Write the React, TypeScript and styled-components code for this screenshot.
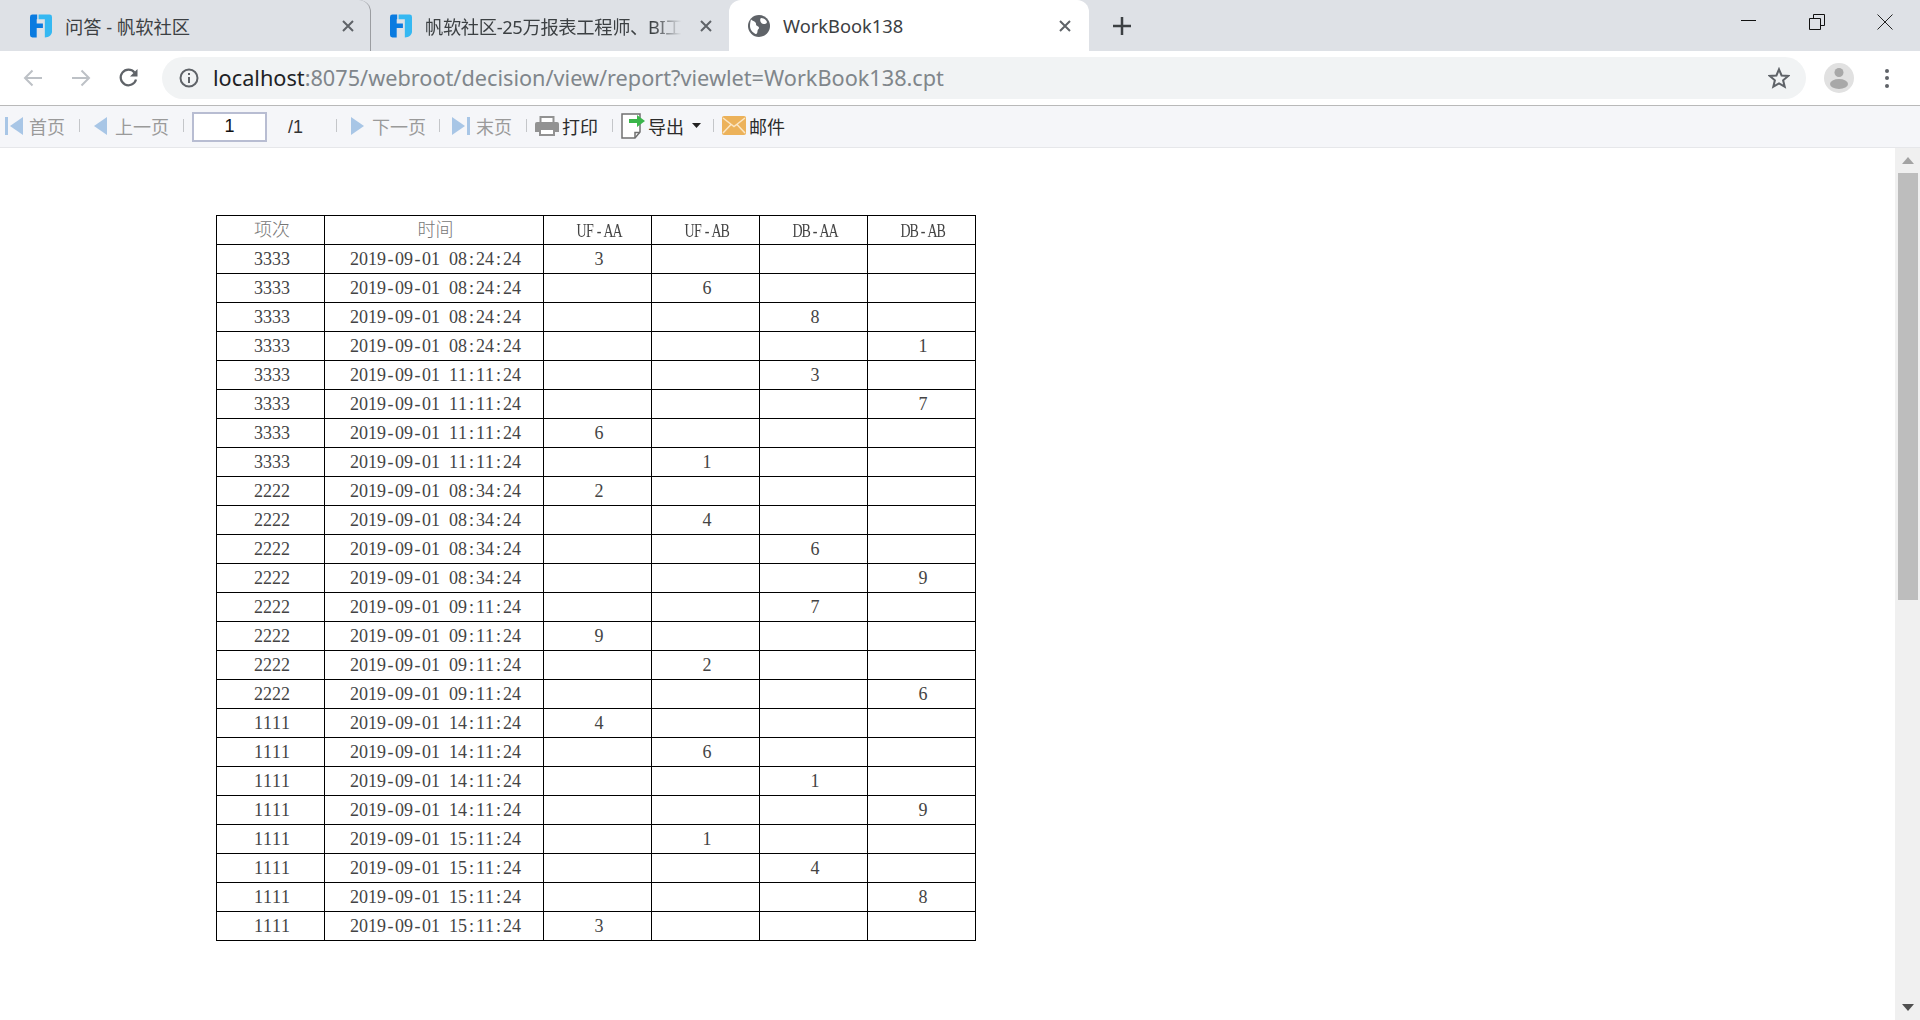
import React from "react";
import styled, { createGlobalStyle } from "styled-components";

const GlobalStyle = createGlobalStyle`
  html, body {
    margin: 0;
    height: 100%;
    overflow: hidden;
    background: #fff;
  }
  * { box-sizing: border-box; }
`;

const Window = styled.div`
  width: 1920px;
  height: 1020px;
  display: flex;
  flex-direction: column;
  font-family: "Noto Sans", "Noto Sans CJK SC", sans-serif;
`;

const TitleBar = styled.div`
  height: 51px;
  flex: none;
  display: flex;
  background: #dee1e6;
  padding-left: 11px;
`;

const Tab = styled.div<{ $width: number; $inset: number; $active?: boolean; $divider?: boolean }>`
  width: ${(p) => p.$width}px;
  display: flex;
  align-items: center;
  gap: 13px;
  padding: 0 ${(p) => p.$inset}px 0 19px;
  border-radius: 12px 12px 0 0;
  background: ${(p) => (p.$active ? "#fff" : "transparent")};
  border-right: ${(p) => (p.$divider ? "1px solid #9b9da1" : "none")};
`;

const TabTitle = styled.span<{ $fade?: boolean }>`
  flex: 1;
  min-width: 0;
  white-space: nowrap;
  font-size: 18.3px;
  color: #3c4043;
  ${(p) =>
    p.$fade &&
    `letter-spacing: -0.35px;
     mask-image: linear-gradient(to right, #000 88%, transparent 99%);`}
`;

const TabClose = styled.span`
  flex: none;
  width: 18px;
  height: 18px;
  display: flex;
  align-items: center;
  justify-content: center;
`;

const NewTab = styled.div`
  width: 66px;
  display: flex;
  align-items: center;
  justify-content: center;
`;

const WindowControls = styled.div`
  margin-left: auto;
  padding-right: 1px;
  display: flex;
  align-items: flex-start;
`;

const WindowButton = styled.div`
  width: 68px;
  height: 44px;
  display: flex;
  align-items: center;
  justify-content: center;
`;

const AddressRow = styled.div`
  height: 55px;
  flex: none;
  display: flex;
  align-items: center;
  background: #fff;
  border-bottom: 1px solid #b9b9b9;
`;

const NavGroup = styled.div`
  flex: none;
  width: 162px;
  padding-left: 9px;
  display: flex;
`;

const NavButton = styled.div`
  width: 48px;
  height: 42px;
  flex: none;
  display: flex;
  align-items: center;
  justify-content: center;
`;

const Omnibox = styled.div`
  width: 1644px;
  height: 42px;
  flex: none;
  display: flex;
  align-items: center;
  padding: 0 16px 0 17px;
  border-radius: 21px;
  background: #f1f3f4;
`;

const UrlText = styled.div`
  margin-left: 14px;
  padding-bottom: 2px;
  flex: 1;
  font-size: 21.7px;
  color: #80868b;
  white-space: nowrap;
  span {
    color: #202124;
  }
`;

const Profile = styled.div`
  margin-left: 18px;
  width: 30px;
  height: 30px;
  flex: none;
`;

const Menu = styled.div`
  margin-left: 25px;
  width: 16px;
  display: flex;
  flex-direction: column;
  align-items: center;
  gap: 3.5px;
  i {
    width: 4px;
    height: 4px;
    border-radius: 50%;
    background: #5f6368;
  }
`;

const ReportToolbar = styled.div`
  height: 42px;
  flex: none;
  display: flex;
  align-items: center;
  padding: 0 0 2px 5px;
  background: #f5f6f9;
  border-bottom: 1px solid #e6e7ea;
  font-size: 18px;
`;

const ToolButton = styled.div<{ $disabled?: boolean; $gap: number }>`
  display: flex;
  align-items: center;
  gap: ${(p) => p.$gap}px;
  color: ${(p) => (p.$disabled ? "#9a9a9a" : "#2b2b2b")};
  white-space: nowrap;
`;

const ToolSep = styled.div<{ $left: number; $right: number }>`
  width: 1px;
  height: 13px;
  flex: none;
  background: #c4c6c9;
  margin: 0 ${(p) => p.$right}px 0 ${(p) => p.$left}px;
`;

const PageInput = styled.div`
  width: 75px;
  height: 30px;
  margin-top: 2px;
  flex: none;
  display: flex;
  align-items: center;
  justify-content: center;
  background: #fff;
  border: 2px solid #b8bdd2;
  font-family: "Liberation Sans", sans-serif;
  font-size: 18px;
  color: #111;
`;

const PageTotal = styled.div`
  margin: 3px 0 0 21px;
  width: 48px;
  font-family: "Liberation Sans", sans-serif;
  font-size: 18px;
  color: #333;
`;

const Caret = styled.svg`
  margin-left: 5px;
`;

const Body = styled.div`
  flex: 1;
  min-height: 0;
  display: flex;
`;

const ReportArea = styled.div`
  flex: 1;
  padding: 67px 0 0 216px;
  background: #fff;
`;

const ReportTable = styled.table`
  width: 759px;
  border-collapse: collapse;
  table-layout: fixed;
  font-family: "Liberation Serif", "Noto Sans CJK SC", serif;
  font-size: 18px;
  color: #444;
`;

const Cell = styled.td`
  height: 29px;
  padding: 0 0 1px 3px;
  border: 1px solid #000;
  text-align: center;
  line-height: 1;
  white-space: pre;
`;

const HeadCell = styled(Cell).attrs({ as: "th" })`
  font-weight: 400;
`;

const CjkLabel = styled.span`
  display: block;
  margin-bottom: 3px;
  font-family: "Noto Sans CJK SC", sans-serif;
  font-weight: 300;
  color: #777;
`;

// SimSun style text: every character takes the same 9px cell
const FixedRun = styled.span<{ $caps?: boolean }>`
  display: inline-block;
  ${(p) => p.$caps && "font-size: 14px; transform: scaleY(1.3);"}
`;

const FixedChar = styled.span`
  display: inline-block;
  width: 9px;
  text-align: center;
`;

const Scrollbar = styled.div`
  width: 25px;
  flex: none;
  display: flex;
  flex-direction: column;
  align-items: center;
  background: #f0f0f0;
`;

const ScrollArrow = styled.div`
  height: 25px;
  flex: none;
  display: flex;
  align-items: center;
  justify-content: center;
`;

const ScrollThumb = styled.div`
  width: 20px;
  height: 427px;
  flex: none;
  background: #bdbdbd;
`;

const ScrollTrack = styled.div`
  flex: 1;
`;

function Fixed({ text, caps }: { text: string; caps?: boolean }) {
  return (
    <FixedRun $caps={caps}>
      {text.split("").map((ch, i) => (
        <FixedChar key={i}>{ch}</FixedChar>
      ))}
    </FixedRun>
  );
}

function FanruanLogo() {
  return (
    <svg width="22" height="24" viewBox="0 0 23 24" style={{ flex: "none" }}>
      <path d="M7.500 0H2.500A2.500 2.500 0 0 0 0 2.500V21.500A2.500 2.500 0 0 0 2.500 24H7V14H13.500V9.500H7V5H7.500Z" fill="#0a7be0" />
      <path d="M9 0H20.500A2.500 2.500 0 0 1 23 2.500V18C23 21 20 24 15.500 24V5H9Z" fill="#35b8f2" />
    </svg>
  );
}

function GlobeIcon() {
  return (
    <svg width="22" height="22" viewBox="0 0 22 22" style={{ flex: "none" }}>
      <circle cx="11" cy="11" r="11" fill="#5f6368" />
      <path d="M3 4.500C5 6 6 6 7.500 7.500C8.500 8.500 7.500 9.500 8.500 10.500C9.500 11.500 11 11.500 11 13C11 14 9.500 14.500 9.500 16C9.500 17.500 9 19.500 7.500 19C4.500 17.500 2 14.500 2 11C2 8.500 2.500 6 3 4.500Z" fill="#fff" />
      <path d="M13 3C15 3 18 4.500 19 7C18.500 9 17 9 15.500 9C14 9 13 8 12.500 6.500C12 5 12 3.500 13 3Z" fill="#fff" />
    </svg>
  );
}

function CloseGlyph() {
  return (
    <svg width="14" height="14" viewBox="0 0 14 14">
      <path d="M2 2L12 12M12 2L2 12" stroke="#5f6368" strokeWidth="2" fill="none" />
    </svg>
  );
}

function PagerIcon({ dir, bar }: { dir: "left" | "right"; bar?: boolean }) {
  const left = dir === "left";
  const width = bar ? 18 : 13;
  const shape = left
    ? `M${width} 0V18L${width - 13} 9Z`
    : "M0 0V18L13 9Z";
  return (
    <svg width={width} height="18" viewBox={`0 0 ${width} 18`} style={{ flex: "none" }}>
      {bar && <rect x={left ? 0 : 15} y="0" width="3" height="18" fill="#a8c6e6" />}
      <path d={shape} fill="#a8c6e6" />
    </svg>
  );
}

function PrinterIcon() {
  return (
    <svg width="24" height="20" viewBox="0 0 24 20" style={{ flex: "none" }}>
      <path d="M5.500 1H18.500V7H5.500Z" fill="#fff" stroke="#929292" strokeWidth="2" />
      <path d="M2 6H22A2 2 0 0 1 24 8V16H0V8A2 2 0 0 1 2 6Z" fill="#929292" />
      <path d="M5 13H19V19H5Z" fill="#fff" stroke="#929292" strokeWidth="2" />
    </svg>
  );
}

function ExportIcon() {
  return (
    <svg width="24" height="26" viewBox="0 0 24 26" style={{ flex: "none" }}>
      <path d="M1 1H19V19L14 25H1Z" fill="#fff" stroke="#707070" strokeWidth="1.500" />
      <path d="M14 25V19.500H19" fill="none" stroke="#707070" strokeWidth="1.500" />
      <path d="M8 6H16V2L24 8L16 14V10H8Z" fill="#3ab54a" />
    </svg>
  );
}

function MailIcon() {
  return (
    <svg width="24" height="19" viewBox="0 0 24 19" style={{ flex: "none" }}>
      <rect width="24" height="19" rx="2" fill="#ecb25a" />
      <path d="M1 2L12 10.500L23 2M1 17L9 8.500M23 17L15 8.500" fill="none" stroke="#fbe6c4" strokeWidth="1.500" />
    </svg>
  );
}

const rows: [string, string, number, string][] = [
  ["3333", "08:24:24", 0, "3"],
  ["3333", "08:24:24", 1, "6"],
  ["3333", "08:24:24", 2, "8"],
  ["3333", "08:24:24", 3, "1"],
  ["3333", "11:11:24", 2, "3"],
  ["3333", "11:11:24", 3, "7"],
  ["3333", "11:11:24", 0, "6"],
  ["3333", "11:11:24", 1, "1"],
  ["2222", "08:34:24", 0, "2"],
  ["2222", "08:34:24", 1, "4"],
  ["2222", "08:34:24", 2, "6"],
  ["2222", "08:34:24", 3, "9"],
  ["2222", "09:11:24", 2, "7"],
  ["2222", "09:11:24", 0, "9"],
  ["2222", "09:11:24", 1, "2"],
  ["2222", "09:11:24", 3, "6"],
  ["1111", "14:11:24", 0, "4"],
  ["1111", "14:11:24", 1, "6"],
  ["1111", "14:11:24", 2, "1"],
  ["1111", "14:11:24", 3, "9"],
  ["1111", "15:11:24", 1, "1"],
  ["1111", "15:11:24", 2, "4"],
  ["1111", "15:11:24", 3, "8"],
  ["1111", "15:11:24", 0, "3"],
];

const colWidths = [108, 219, 108, 108, 108, 108];

export default function App() {
  return (
    <Window>
      <GlobalStyle />
      <TitleBar>
        <Tab $width={360} $inset={13} $divider>
          <FanruanLogo />
          <TabTitle>问答 - 帆软社区</TabTitle>
          <TabClose><CloseGlyph /></TabClose>
        </Tab>
        <Tab $width={358} $inset={14}>
          <FanruanLogo />
          <TabTitle $fade>帆软社区-25万报表工程师、BI工</TabTitle>
          <TabClose><CloseGlyph /></TabClose>
        </Tab>
        <Tab $width={360} $inset={15} $active>
          <GlobeIcon />
          <TabTitle>WorkBook138</TabTitle>
          <TabClose><CloseGlyph /></TabClose>
        </Tab>
        <NewTab>
          <svg width="18" height="18" viewBox="0 0 18 18">
            <path d="M9 0V18M0 9H18" stroke="#3c4043" strokeWidth="2.500" fill="none" />
          </svg>
        </NewTab>
        <WindowControls>
          <WindowButton>
            <svg width="16" height="16" viewBox="0 0 16 16">
              <path d="M0 6.500H15" stroke="#111" fill="none" />
            </svg>
          </WindowButton>
          <WindowButton>
            <svg width="16" height="16" viewBox="0 0 16 16">
              <path d="M.5 4.500H11.500V15.500H.5ZM4.500 4.500V.5H15.500V11.500H11.500" stroke="#111" fill="none" />
            </svg>
          </WindowButton>
          <WindowButton>
            <svg width="16" height="16" viewBox="0 0 16 16">
              <path d="M.5 .5L15.500 15.500M15.500 .5L.5 15.500" stroke="#222" fill="none" />
            </svg>
          </WindowButton>
        </WindowControls>
      </TitleBar>

      <AddressRow>
        <NavGroup>
          <NavButton>
            <svg width="22" height="22" viewBox="0 0 22 22">
              <path d="M20 11H3M10.500 3.500L3 11L10.500 18.500" stroke="#bdc1c6" strokeWidth="2" fill="none" />
            </svg>
          </NavButton>
          <NavButton>
            <svg width="22" height="22" viewBox="0 0 22 22">
              <path d="M2 11H19M11.500 3.500L19 11L11.500 18.500" stroke="#bdc1c6" strokeWidth="2" fill="none" />
            </svg>
          </NavButton>
          <NavButton>
            <svg width="22" height="22" viewBox="0 0 22 22">
              <path d="M18 12.500A7.800 7.800 0 1 1 16.500 5.500" stroke="#5f6368" strokeWidth="2.200" fill="none" />
              <path d="M19.500 2V9.500H12Z" fill="#5f6368" />
            </svg>
          </NavButton>
        </NavGroup>
        <Omnibox>
          <svg width="20" height="20" viewBox="0 0 20 20" style={{ flex: "none" }}>
            <circle cx="10" cy="10" r="8.500" stroke="#5f6368" strokeWidth="2" fill="none" />
            <path d="M10 9V15M10 5V7" stroke="#5f6368" strokeWidth="2" fill="none" />
          </svg>
          <UrlText><span>localhost</span>:8075/webroot/decision/view/report?viewlet=WorkBook138.cpt</UrlText>
          <svg width="22" height="22" viewBox="0 0 24 24" style={{ flex: "none" }}>
            <path d="M12 2.500L14.800 9.200L22 9.800L16.500 14.500L18.200 21.500L12 17.800L5.800 21.500L7.500 14.500L2 9.800L9.200 9.200Z" stroke="#5f6368" strokeWidth="2.200" fill="none" />
          </svg>
        </Omnibox>
        <Profile>
          <svg width="30" height="30" viewBox="0 0 30 30">
            <circle cx="15" cy="15" r="15" fill="#e1e1e1" />
            <circle cx="15" cy="9.500" r="4.500" fill="#a8a8a8" />
            <ellipse cx="15" cy="21" rx="9" ry="5" fill="#a8a8a8" />
          </svg>
        </Profile>
        <Menu><i /><i /><i /></Menu>
      </AddressRow>

      <ReportToolbar>
        <ToolButton $disabled $gap={6}><PagerIcon dir="left" bar />首页</ToolButton>
        <ToolSep $left={14} $right={14} />
        <ToolButton $disabled $gap={8}><PagerIcon dir="left" />上一页</ToolButton>
        <ToolSep $left={14} $right={8} />
        <PageInput>1</PageInput>
        <PageTotal>/1</PageTotal>
        <ToolSep $left={0} $right={14} />
        <ToolButton $disabled $gap={8}><PagerIcon dir="right" />下一页</ToolButton>
        <ToolSep $left={13} $right={12} />
        <ToolButton $disabled $gap={6}><PagerIcon dir="right" bar />末页</ToolButton>
        <ToolSep $left={14} $right={8} />
        <ToolButton $gap={3}><PrinterIcon />打印</ToolButton>
        <ToolSep $left={14} $right={8} />
        <ToolButton $gap={3}>
          <ExportIcon />导出
          <Caret width="9" height="5" viewBox="0 0 9 5">
            <path d="M0 0H9L4.500 5Z" fill="#222" />
          </Caret>
        </ToolButton>
        <ToolSep $left={12} $right={8} />
        <ToolButton $gap={3}><MailIcon />邮件</ToolButton>
      </ReportToolbar>

      <Body>
        <ReportArea>
          <ReportTable>
            <colgroup>
              {colWidths.map((w, i) => (
                <col key={i} width={w} />
              ))}
            </colgroup>
            <thead>
              <tr>
                <HeadCell><CjkLabel>项次</CjkLabel></HeadCell>
                <HeadCell><CjkLabel>时间</CjkLabel></HeadCell>
                {["UF-AA", "UF-AB", "DB-AA", "DB-AB"].map((name) => (
                  <HeadCell key={name}><Fixed text={name} caps /></HeadCell>
                ))}
              </tr>
            </thead>
            <tbody>
              {rows.map(([item, time, col, value], i) => (
                <tr key={i}>
                  <Cell><Fixed text={item} /></Cell>
                  <Cell><Fixed text={`2019-09-01 ${time}`} /></Cell>
                  {[0, 1, 2, 3].map((c) => (
                    <Cell key={c}>{c === col ? <Fixed text={value} /> : ""}</Cell>
                  ))}
                </tr>
              ))}
            </tbody>
          </ReportTable>
        </ReportArea>
        <Scrollbar>
          <ScrollArrow>
            <svg width="12" height="7" viewBox="0 0 12 7"><path d="M6 0L12 7H0Z" fill="#a3a3a3" /></svg>
          </ScrollArrow>
          <ScrollThumb />
          <ScrollTrack />
          <ScrollArrow>
            <svg width="12" height="7" viewBox="0 0 12 7"><path d="M0 0H12L6 7Z" fill="#505050" /></svg>
          </ScrollArrow>
        </Scrollbar>
      </Body>
    </Window>
  );
}
